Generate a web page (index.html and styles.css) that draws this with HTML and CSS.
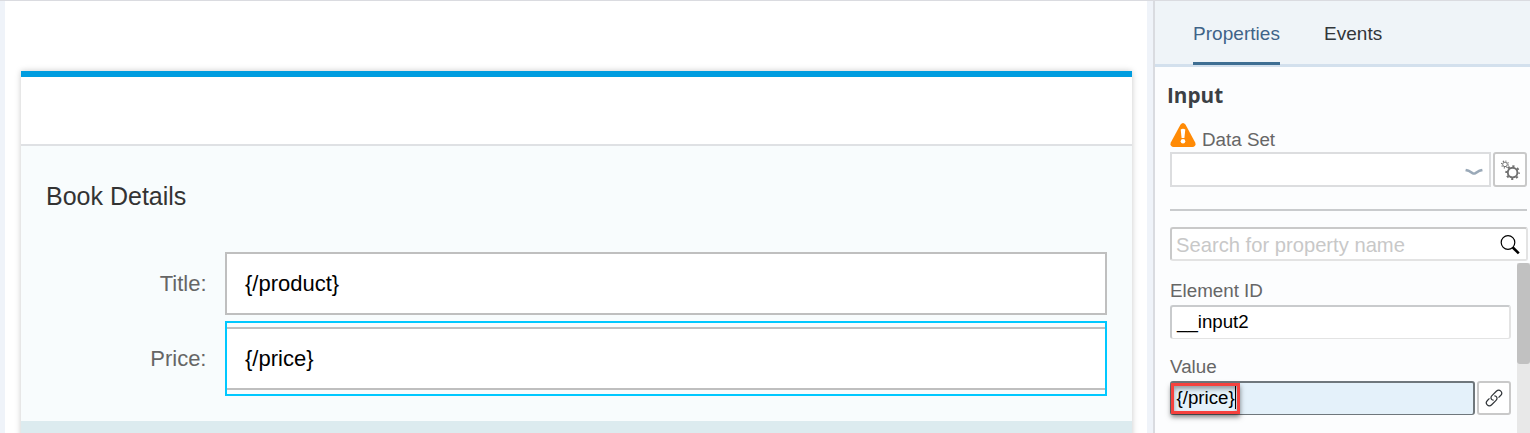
FILE: index.html
```html
<!DOCTYPE html>
<html lang="en">
<head>
<meta charset="utf-8">
<title>Book Details</title>
<link rel="stylesheet" href="styles.css">
</head>
<body>
<div class="app">
  <main class="canvas">
    <section class="card">
      <div class="card-bar"></div>
      <div class="card-body">
        <h2 class="card-title">Book Details</h2>
        <div class="form-row">
          <label class="form-label">Title:</label>
          <div class="form-input">{/product}</div>
        </div>
        <div class="form-row form-row-selected">
          <label class="form-label">Price:</label>
          <div class="selection"><div class="form-input">{/price}</div></div>
        </div>
      </div>
      <div class="card-footer"></div>
    </section>
  </main>
  <aside class="panel">
    <nav class="tabs">
      <div class="tab tab-active">Properties</div>
      <div class="tab">Events</div>
    </nav>
    <div class="panel-body">
      <h3 class="panel-title">Input</h3>
      <div class="dataset-label">
        <svg class="warning" width="26" height="24" viewBox="0 0 26 24">
          <path d="M10.4 1.7Q13-1.5 15.6 1.7L25.2 19.5Q26.5 23.5 22.5 24H3.5Q-.5 23.5.8 19.5Z" fill="#ff8a05"/>
          <path d="M10.7 6.5Q13 5.1 15.3 6.5L14.4 15H11.6Z" fill="#fff"/>
          <circle cx="13" cy="18.3" r="2.3" fill="#fff"/>
        </svg>
        <span>Data Set</span>
      </div>
      <div class="dataset-row">
        <div class="select">
          <svg width="18" height="8" viewBox="0 0 18 8"><path d="M.6 2L3.5 2.7L7.5 5.1Q9 5.9 10.5 5.1L14.5 2.7L17.4 2" fill="none" stroke="#9aa9b8" stroke-width="2.5"/></svg>
        </div>
        <div class="button gear-button">
          <svg width="20" height="20" viewBox="0 0 20 20" fill="none" stroke="#707070">
            <circle cx="12.6" cy="12.6" r="4.8" stroke-width="1.9"/>
            <circle cx="12.6" cy="12.6" r="6.4" stroke-width="1.8" stroke-dasharray="2.2 2.826" stroke-dashoffset="1"/>
            <circle cx="5" cy="4.4" r="2.3" stroke-width="1"/>
            <circle cx="5" cy="4.4" r="3.4" stroke-width="1.2" stroke-dasharray="1.1 1.57"/>
          </svg>
        </div>
      </div>
      <div class="divider"></div>
      <div class="search">
        <span class="placeholder">Search for property name</span>
        <svg width="20" height="20" viewBox="0 0 20 20" fill="none" stroke="#000">
          <circle cx="8" cy="7.5" r="6.8" stroke-width="1.2"/>
          <path d="M12.8 12.5L18.8 18.4" stroke-width="2.6"/>
        </svg>
      </div>
      <div class="field-label">Element ID</div>
      <div class="text-input">__input2</div>
      <div class="field-label field-label-value">Value</div>
      <div class="value-row">
        <div class="text-input text-input-focus"><span class="caret-text">{/price}</span><div class="highlight"></div></div>
        <div class="button link-button">
          <svg width="18" height="18" viewBox="0 0 18 18" fill="none" stroke="#303438" stroke-width="1.2">
            <g transform="rotate(-45 9 9)">
              <path d="M7.2 10.3Q6.4 9.6 6.4 8.6Q6.4 5.9 9.2 5.9H15.4Q18.7 5.9 18.7 8.9T15.4 11.9H12.5"/>
              <path d="M10.8 7.7Q11.6 8.4 11.6 9.4Q11.6 12.1 8.8 12.1H2.6Q-.7 12.1-.7 9.1T2.6 6.1H5.5"/>
            </g>
          </svg>
        </div>
      </div>
    </div>
    <div class="scrollbar"><div class="thumb"></div></div>
  </aside>
</div>
</body>
</html>
```
FILE: styles.css
```css
* { box-sizing: border-box; }

body {
  margin: 0;
  overflow: hidden;
  font-family: "Liberation Sans", Arial, sans-serif;
}

.app {
  display: flex;
  width: 1530px;
  height: 433px;
  border-top: 1px solid #dadbe0;
  background: #eff3f9;
  overflow: hidden;
}

.canvas {
  width: 1142px;
  margin-left: 5px;
  padding: 70px 15px 0 16px;
  background: #fff;
  overflow: hidden;
}

.card {
  height: 400px;
  box-shadow: 0 0 6px rgba(0, 0, 0, 0.22);
}

.card-bar {
  height: 75px;
  border-top: 6px solid #009de0;
  border-bottom: 2px solid #dfe1e4;
  background: #fff;
}

.card-body {
  height: 275px;
  padding: 36px 25px 0;
  background: #f8fcfd;
}

.card-title {
  margin: 0 0 41px;
  font-size: 25px;
  font-weight: 400;
  line-height: 29px;
  color: #333;
}

.form-row {
  display: flex;
  align-items: center;
  height: 63px;
}

.form-row-selected {
  height: 75px;
  margin-top: 6px;
}

.form-label {
  width: 160.5px;
  margin-right: 18.5px;
  text-align: right;
  font-size: 22px;
  color: #666;
}

.form-input {
  flex: 1;
  height: 63px;
  padding-left: 18px;
  border: 2px solid #bfbfbf;
  background: #fff;
  font-size: 22px;
  line-height: 59px;
  color: #000;
}

.selection {
  flex: 1;
  height: 75px;
  padding: 4px 0;
  border: 2px solid #00c8ff;
}

.selection .form-input {
  border-width: 2px 0;
}

.card-footer {
  height: 50px;
  background: #dcebef;
}

.panel {
  position: relative;
  width: 377px;
  margin-left: 6px;
  border-left: 2px solid #d9dbe0;
  background: #fcfdfe;
}

.tabs {
  display: flex;
  gap: 44px;
  height: 66px;
  padding-left: 38px;
  border-bottom: 3px solid #d3e0ed;
  background: #eff4f8;
}

.tab {
  height: 64px;
  font-size: 19px;
  line-height: 66px;
  letter-spacing: 0.04px;
  color: #32363a;
}

.tab-active {
  width: 87px;
  border-bottom: 3px solid #3f6f93;
  color: #3f6388;
}

.panel-body {
  padding: 15px 3px 0 15px;
}

.panel-title {
  margin: 0 0 1px -3px;
  font-family: "Open Sans", "Noto Sans", sans-serif;
  font-size: 20.7px;
  font-weight: 700;
  line-height: 26px;
  color: #3b4045;
}

.dataset-label {
  display: flex;
  gap: 6px;
  height: 43px;
  padding-top: 14px;
  font-size: 18.8px;
  line-height: 33px;
  color: #666;
}

.dataset-row {
  display: flex;
  gap: 2px;
}

.select {
  display: flex;
  align-items: center;
  justify-content: flex-end;
  width: 321px;
  height: 35px;
  padding: 5px 6px 0 0;
  border: 2px solid #dcdddf;
  background: #fff;
}

.button {
  display: flex;
  align-items: center;
  justify-content: center;
  width: 34px;
  height: 35px;
  border: 2px solid #c9c9c9;
  border-radius: 3px;
  background: #fff;
}

.divider {
  height: 2px;
  margin: 22px 0 16px;
  background: #c9cbcd;
}

.search {
  display: flex;
  align-items: center;
  justify-content: space-between;
  width: 358px;
  height: 34px;
  padding: 1px 6px 0 4px;
  border: 2px solid #e3e3e3;
  border-top-color: #c9c9c9;
  border-left-color: #c9c9c9;
  border-radius: 3px;
  background: #fff;
  font-size: 20.2px;
  color: #c8c8c8;
}

.placeholder {
  padding-top: 2px;
}

.field-label {
  margin-top: 19px;
  height: 25px;
  font-size: 18.8px;
  line-height: 22px;
  color: #666;
}

.field-label-value {
  margin-top: 17px;
}

.text-input {
  position: relative;
  width: 341px;
  height: 34px;
  padding-left: 5px;
  border: 2px solid #e3e3e3;
  border-bottom-width: 1px;
  border-top-color: #c9cbcd;
  border-left-color: #c9cbcd;
  border-radius: 3px;
  background: #fff;
  font-size: 18.7px;
  line-height: 29px;
  color: #000;
}

.value-row {
  display: flex;
  gap: 2px;
}

.text-input-focus {
  width: 305px;
  padding-left: 4.5px;
  border-color: #6f777c;
  background: #e4f1fa;
}

.caret-text {
  padding: 1px 0;
  border-right: 1px solid #000;
}

.highlight {
  position: absolute;
  left: -1px;
  top: 0;
  width: 69px;
  height: 31px;
  border: 3px solid #f5423e;
  box-shadow: 0 3px 5px rgba(0, 0, 0, 0.5), inset 0 3px 4px rgba(0, 0, 0, 0.35);
}

.link-button {
  height: 34px;
}

.scrollbar {
  position: absolute;
  top: 262px;
  right: 0;
  width: 13px;
  height: 171px;
  background: #e8e8e8;
}

.thumb {
  height: 101px;
  border-radius: 3px;
  background: #c1c1c1;
}
```
